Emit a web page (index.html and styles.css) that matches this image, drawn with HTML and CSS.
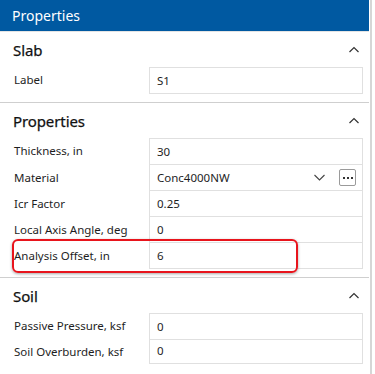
FILE: index.html
```html
<!DOCTYPE html>
<html>
<head>
<meta charset="utf-8">
<link rel="stylesheet" href="styles.css">
</head>
<body>
<div class="frame">
  <div class="panel">
    <div class="titlebar">Properties</div>

    <section class="section">
      <div class="sec-head">
        <span class="sec-title">Slab</span>
        <svg class="chev" width="12" height="8" viewBox="0 0 12 8"><path d="M1.5 6 L6 1.5 L10.5 6" fill="none" stroke="#333" stroke-width="1.2"/></svg>
      </div>
      <div class="rows">
        <div class="row"><div class="lbl">Label</div><div class="val">S1</div></div>
      </div>
    </section>

    <section class="section">
      <div class="sec-head">
        <span class="sec-title">Properties</span>
        <svg class="chev" width="12" height="8" viewBox="0 0 12 8"><path d="M1.5 6 L6 1.5 L10.5 6" fill="none" stroke="#333" stroke-width="1.2"/></svg>
      </div>
      <div class="rows">
        <div class="row"><div class="lbl">Thickness, in</div><div class="val">30</div></div>
        <div class="row"><div class="lbl">Material</div>
          <div class="val combo"><span>Conc4000NW</span>
            <svg class="dd" width="11" height="7" viewBox="0 0 11 7"><path d="M0.5 1 L5.5 6 L10.5 1" fill="none" stroke="#444" stroke-width="1.1"/></svg>
            <span class="more"><i></i><i></i><i></i></span>
          </div>
        </div>
        <div class="row"><div class="lbl">Icr Factor</div><div class="val">0.25</div></div>
        <div class="row"><div class="lbl">Local Axis Angle, deg</div><div class="val">0</div></div>
        <div class="row hl"><div class="lbl">Analysis Offset, in</div><div class="val">6</div><div class="mark"></div></div>
      </div>
    </section>

    <section class="section soil">
      <div class="sec-head">
        <span class="sec-title">Soil</span>
        <svg class="chev" width="12" height="8" viewBox="0 0 12 8"><path d="M1.5 6 L6 1.5 L10.5 6" fill="none" stroke="#333" stroke-width="1.2"/></svg>
      </div>
      <div class="rows">
        <div class="row"><div class="lbl">Passive Pressure, ksf</div><div class="val">0</div></div>
        <div class="row"><div class="lbl">Soil Overburden, ksf</div><div class="val">0</div></div>
      </div>
    </section>
  </div>
  <div class="gutter"></div>
</div>
</body>
</html>
```

FILE: styles.css
```css
* { box-sizing: border-box; }
html, body { margin: 0; padding: 0; }
body {
  width: 375px;
  height: 374px;
  overflow: hidden;
  background: #fff;
  font-family: "Noto Sans", "Open Sans", sans-serif;
  color: #1e1e1e;
}
.frame { display: flex; height: 374px; }
.panel { width: 369px; flex: none; }
.gutter {
  flex: none;
  width: 6px;
  margin-left: 1px;
  border-left: 2px solid #d6d6d6;
}
.titlebar {
  height: 32px;
  background: #0059a1;
  color: #fff;
  font-size: 14px;
  line-height: 31px;
  padding-left: 12px;
  border-bottom: 1px solid #e4e4e4;
}
.section {
  border-bottom: 1px solid #cfcfcf;
  padding-bottom: 8px;
}
.sec-head {
  height: 35px;
  display: flex;
  align-items: center;
  justify-content: space-between;
  padding: 0 9px 0 13px;
}
.sec-title {
  font-size: 15px;
  font-weight: 400;
  color: #111;
  letter-spacing: -0.1px;
  -webkit-text-stroke: 0.25px #111;
}
.chev { display: block; }
.rows { padding-right: 6px; }
.row {
  position: relative;
  display: flex;
  height: 26px;
}
.lbl {
  width: 149px;
  flex: none;
  padding-left: 14px;
  font-size: 11.5px;
  line-height: 26px;
  white-space: nowrap;
}
.val {
  flex: 1;
  border: 1px solid #e0e0e0;
  border-top: none;
  padding-left: 7px;
  font-size: 11.5px;
  line-height: 25px;
  display: flex;
  align-items: center;
}
.row:first-child .val { border-top: 1px solid #e0e0e0; height: 27px; }
.row:first-child { height: 27px; }
.combo span:first-child { flex: 1; }
.dd { margin-right: 14px; display: block; }
.more {
  width: 17px;
  height: 17px;
  border: 1px solid #9a9a9a;
  border-radius: 2px;
  margin-right: 6px;
  display: flex;
  align-items: center;
  justify-content: center;
  gap: 2px;
}
.more i {
  width: 2px;
  height: 2px;
  background: #333;
  display: block;
}
.mark {
  position: absolute;
  left: 12px;
  top: -4px;
  width: 286px;
  height: 34px;
  border: 2px solid #e8141c;
  border-radius: 6px;
  box-shadow: 0 1px 3px rgba(0,0,0,0.35);
  pointer-events: none;
}
.soil { border-bottom: none; }
.soil .row { height: 25px; }
.soil .row:first-child { height: 26px; }
.soil .val { line-height: 24px; }
.soil .lbl { line-height: 25px; }
```
